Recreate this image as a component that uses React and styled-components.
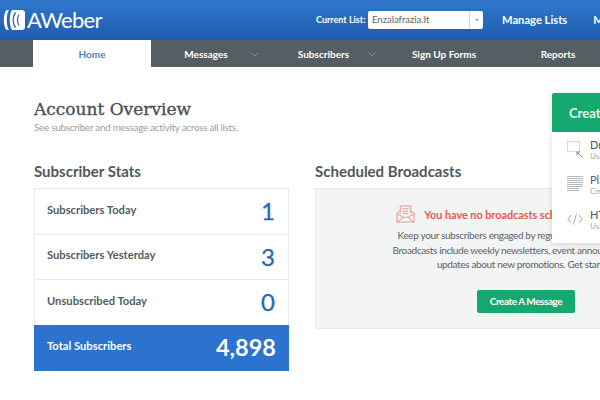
import styled, { createGlobalStyle } from 'styled-components';

const GlobalStyle = createGlobalStyle`
    html, body {
        margin: 0;
        padding: 0;
        width: 600px;
        height: 400px;
        overflow: hidden;
        background: #ffffff;
    }

    * {
        box-sizing: border-box;
    }
`;

const stats = [
    { label: 'Subscribers Today', value: '1' },
    { label: 'Subscribers Yesterday', value: '3' },
    { label: 'Unsubscribed Today', value: '0' },
];

const createItems = [
    { title: 'Drag & Drop', sub: 'Use our editor', icon: <DragIcon /> },
    { title: 'Plain Text', sub: 'Create a simple email', icon: <PlainIcon /> },
    { title: 'HTML', sub: 'Use your own code', icon: <CodeIcon /> },
];

const navItems = [
    { label: 'Home', width: 118, active: true },
    { label: 'Messages', width: 110, caretRight: 2 },
    { label: 'Subscribers', width: 125, caretRight: 10 },
    { label: 'Sign Up Forms', width: 116 },
    { label: 'Reports', width: 112 },
];

function LogoMark() {
    return (
        <svg width="22" height="22" viewBox="0 0 22 22">
            <path d="M3.5 1 C0 5 0 17 3.5 21 L6 21 C3 17 3 5 6 1 Z" fill="#fff" />
            <path d="M9 1 C6 5 6 17 9 21 L19 21 C21 21 22 20 22 18 L22 4 C22 2 21 1 19 1 Z" fill="#fff" />
            <path d="M12.5 3.5 C9.5 8 9.5 14 12.5 18.5" stroke="#2a6cc0" strokeWidth="1.5" fill="none" />
            <path d="M16 5.5 C14 9 14 13 16 16.5" stroke="#2a6cc0" strokeWidth="1.3" fill="none" />
        </svg>
    );
}

function EnvelopeIcon() {
    return (
        <svg width="19" height="20" viewBox="0 0 20 20" fill="none" stroke="#ee9a96" strokeWidth="1.1">
            <path d="M4.5 9 V1.5 H15.5 V9" />
            <path d="M7 4.5 H13 M7 7 H13 M7 9.5 H13" />
            <path d="M4.5 6.5 L1 9.5 V18.5 H19 V9.5 L15.5 6.5" />
            <path d="M1 9.5 L7.5 13.5 H12.5 L19 9.5" />
            <path d="M1 18.5 L7.5 13.5 M19 18.5 L12.5 13.5" />
        </svg>
    );
}

function DragIcon() {
    return (
        <svg width="16" height="17" viewBox="0 0 16 17" fill="none" stroke="#c2c6c8" strokeWidth="1">
            <path d="M.5 .5 H12.5 V10.5 H.5 Z" strokeDasharray="2 1" />
            <path d="M10 11 L15.5 16.5 M10 11 V14 M10 11 H13" stroke="#7d8488" />
        </svg>
    );
}

function PlainIcon() {
    return (
        <svg width="16" height="16" viewBox="0 0 16 16" stroke="#b4b8ba" strokeWidth="1">
            <path d="M0 .5 H16 M0 2.5 H16 M0 4.5 H16 M0 6.5 H16 M0 8.5 H16 M0 10.5 H16 M0 12.5 H12 M0 14.5 H12" />
        </svg>
    );
}

function CodeIcon() {
    return (
        <svg width="16" height="12" viewBox="0 0 16 12" fill="none" stroke="#a9aeb1" strokeWidth="1">
            <path d="M4 2 L.8 6 L4 10 M12 2 L15.2 6 L12 10 M9.5 .5 L6.5 11.5" />
        </svg>
    );
}

function Caret() {
    return (
        <svg width="8" height="5" viewBox="0 0 8 5" fill="none" stroke="#868e92" strokeWidth="1">
            <path d="M.5 .5 L4 4 L7.5 .5" />
        </svg>
    );
}

export default function App() {
    return (
        <Page>
            <GlobalStyle />

            <Header>
                <Logo>
                    <LogoMark />
                    <LogoText>AWeber</LogoText>
                </Logo>

                <HeaderRight>
                    <ListLabel>Current List:</ListLabel>
                    <ListSelect>
                        <ListValue>Enzalafrazia.It</ListValue>
                        <ListArrow />
                    </ListSelect>
                    <HeaderLink>Manage Lists</HeaderLink>
                    <HeaderLink>My Account</HeaderLink>
                </HeaderRight>
            </Header>

            <Nav>
                {navItems.map((item) => (
                    <NavItem key={item.label} $active={item.active} $width={item.width}>
                        {item.label}
                        {item.caretRight && <CaretSlot $right={item.caretRight}><Caret /></CaretSlot>}
                    </NavItem>
                ))}
            </Nav>

            <Main>
                <Title>Account Overview</Title>
                <Subtitle>See subscriber and message activity across all lists.</Subtitle>

                <Columns>
                    <StatsColumn>
                        <SectionTitle>Subscriber Stats</SectionTitle>
                        <StatsBox>
                            {stats.map((stat) => (
                                <StatRow key={stat.label}>
                                    <StatLabel>{stat.label}</StatLabel>
                                    <StatValue>{stat.value}</StatValue>
                                </StatRow>
                            ))}
                            <TotalRow>
                                <TotalLabel>Total Subscribers</TotalLabel>
                                <TotalValue>4,898</TotalValue>
                            </TotalRow>
                        </StatsBox>
                    </StatsColumn>

                    <BroadcastColumn>
                        <SectionTitle>Scheduled Broadcasts</SectionTitle>
                        <BroadcastPanel>
                            <EmptyHeading>
                                <EnvelopeIcon />
                                <EmptyTitle>You have no broadcasts scheduled at the moment</EmptyTitle>
                            </EmptyHeading>
                            <EmptyText>Keep your subscribers engaged by regularly sending them email.</EmptyText>
                            <EmptyText>Broadcasts include weekly newsletters, event announcements and</EmptyText>
                            <EmptyText>updates about new promotions. Get started.</EmptyText>
                            <GreenButton>Create A Message</GreenButton>
                        </BroadcastPanel>
                    </BroadcastColumn>
                </Columns>
            </Main>

            <CreateMenu>
                <CreateHead>Create A Message</CreateHead>
                {createItems.map((item) => (
                    <CreateItem key={item.title}>
                        <CreateIcon>{item.icon}</CreateIcon>
                        <div>
                            <CreateTitle>{item.title}</CreateTitle>
                            <CreateSub>{item.sub}</CreateSub>
                        </div>
                    </CreateItem>
                ))}
            </CreateMenu>
        </Page>
    );
}

const Page = styled.div`
    position: relative;
    width: 600px;
    height: 400px;
    overflow: hidden;
    background: #ffffff;
    font-family: "Lato", "Noto Sans", sans-serif;
`;

const Header = styled.header`
    height: 41px;
    display: flex;
    align-items: center;
    justify-content: space-between;
    padding: 0 0 2px 3px;
    white-space: nowrap;
    background: linear-gradient(#2f77cc, #1f5cae);
`;

const Logo = styled.div`
    display: flex;
    align-items: center;
    gap: 2px;
`;

const LogoText = styled.span`
    color: #ffffff;
    font-size: 22px;
    letter-spacing: -0.7px;
`;

const HeaderRight = styled.div`
    display: flex;
    align-items: center;
    width: 284px;
    flex: none;
`;

const ListLabel = styled.span`
    color: #ffffff;
    font-size: 9px;
    font-weight: 700;
    width: 52px;
    flex: none;
`;

const ListSelect = styled.div`
    width: 115px;
    height: 18px;
    flex: none;
    display: flex;
    align-items: center;
    background: #ffffff;
    border-radius: 2px;
    padding-left: 4px;
`;

const ListValue = styled.span`
    flex: 1;
    color: #5d6468;
    font-size: 9.5px;
`;

const ListArrow = styled.span`
    width: 14px;
    height: 100%;
    flex: none;
    border-left: 1px solid #d5d8da;
    position: relative;

    &::after {
        content: "";
        position: absolute;
        left: 5px;
        top: 8px;
        border: 2px solid transparent;
        border-top: 2px solid #8b9296;
    }
`;

const HeaderLink = styled.span`
    color: #ffffff;
    font-size: 11.2px;
    font-weight: 700;
    margin-left: 19px;
    flex: none;

    & + & {
        margin-left: 26px;
    }
`;

const Nav = styled.nav`
    height: 27px;
    margin-top: -1px;
    display: flex;
    padding-left: 33px;
    background: #555e63;
`;

const NavItem = styled.div`
    position: relative;
    width: ${(props) => props.$width}px;
    flex: none;
    display: flex;
    align-items: center;
    justify-content: center;
    color: ${(props) => (props.$active ? '#4a7fc6' : '#ffffff')};
    background: ${(props) => (props.$active ? '#ffffff' : 'transparent')};
    font-size: 10px;
    font-weight: 700;
`;

const CaretSlot = styled.span`
    position: absolute;
    right: ${(props) => props.$right}px;
    top: 12px;
    line-height: 0;
`;

const Main = styled.main`
    padding: 30px 0 0 34px;
`;

const Title = styled.h1`
    margin: 0;
    color: #4a5154;
    font-family: "DejaVu Serif", "Liberation Serif", serif;
    font-size: 17px;
    line-height: 24px;
    font-weight: 400;
    -webkit-text-stroke: 0.35px #4a5154;
`;

const Subtitle = styled.p`
    margin: 0;
    color: #9a9fa2;
    font-size: 10px;
    letter-spacing: -0.32px;
    line-height: 13px;
`;

const Columns = styled.div`
    display: flex;
    gap: 26px;
    margin-top: 27px;
`;

const StatsColumn = styled.section`
    width: 255px;
    flex: none;
`;

const BroadcastColumn = styled.section`
    width: 422px;
    flex: none;
`;

const SectionTitle = styled.h2`
    margin: 0 0 7px;
    color: #50585c;
    font-size: 15px;
    line-height: 20px;
    font-weight: 700;
`;

const StatsBox = styled.div`
    border: 1px solid #e6e8e9;
`;

const StatRow = styled.div`
    height: 45.5px;
    display: flex;
    align-items: center;
    justify-content: space-between;
    padding: 0 13px 0 12px;
    border-bottom: 1px solid #e6e8e9;
`;

const StatLabel = styled.span`
    color: #555c60;
    font-size: 11.2px;
    font-weight: 700;
    padding-bottom: 4px;
`;

const StatValue = styled.span`
    color: #2a68bb;
    font-size: 24px;
    line-height: 1;
    -webkit-text-stroke: 0.3px #2a68bb;
`;

const TotalRow = styled(StatRow)`
    height: 46px;
    margin: -1px -1px -1px -1px;
    padding-left: 13px;
    background: #2b73cf;
    border-bottom: none;
`;

const TotalLabel = styled(StatLabel)`
    color: #ffffff;
`;

const TotalValue = styled(StatValue)`
    color: #ffffff;
    font-size: 23.5px;
    font-weight: 700;
    -webkit-text-stroke: 0;
`;

const BroadcastPanel = styled.div`
    height: 141px;
    padding-top: 15px;
    display: flex;
    flex-direction: column;
    align-items: center;
    background: #f3f4f4;
    border: 1px solid #e6e8e9;
`;

const EmptyHeading = styled.div`
    display: flex;
    align-items: center;
    gap: 9px;
    margin-bottom: 4px;
    padding-left: 6px;
    white-space: nowrap;
`;

const EmptyTitle = styled.span`
    color: #e8594e;
    font-size: 10.8px;
    font-weight: 700;
`;

const EmptyText = styled.p`
    margin: 0;
    color: #5c6367;
    font-size: 10px;
    letter-spacing: -0.36px;
    line-height: 14.5px;
    white-space: nowrap;
`;

const GreenButton = styled.button`
    width: 98px;
    height: 23px;
    margin-top: 18px;
    border: none;
    border-radius: 2px;
    color: #ffffff;
    background: #15a96f;
    font-family: inherit;
    font-size: 10px;
    letter-spacing: -0.45px;
    font-weight: 700;
`;

const CreateMenu = styled.div`
    position: absolute;
    left: 552px;
    top: 93px;
    width: 170px;
    height: 150px;
    background: #ffffff;
    box-shadow: 0 1px 5px rgba(0, 0, 0, 0.14);
`;

const CreateHead = styled.div`
    height: 39px;
    margin-bottom: -1px;
    display: flex;
    align-items: center;
    padding-left: 17px;
    color: #e8f7f0;
    background: #15a96f;
    border-radius: 2px 2px 0 0;
    font-size: 13px;
    font-weight: 700;
`;

const CreateItem = styled.div`
    height: 34px;
    margin-top: 1px;
    display: flex;
    align-items: center;
    white-space: nowrap;
`;

const CreateIcon = styled.span`
    width: 38px;
    flex: none;
    display: flex;
    justify-content: center;
    padding-left: 8px;
`;

const CreateTitle = styled.div`
    color: #50585c;
    font-size: 11px;
    line-height: 13px;
`;

const CreateSub = styled.div`
    color: #a7acae;
    font-size: 8px;
    line-height: 10px;
`;
